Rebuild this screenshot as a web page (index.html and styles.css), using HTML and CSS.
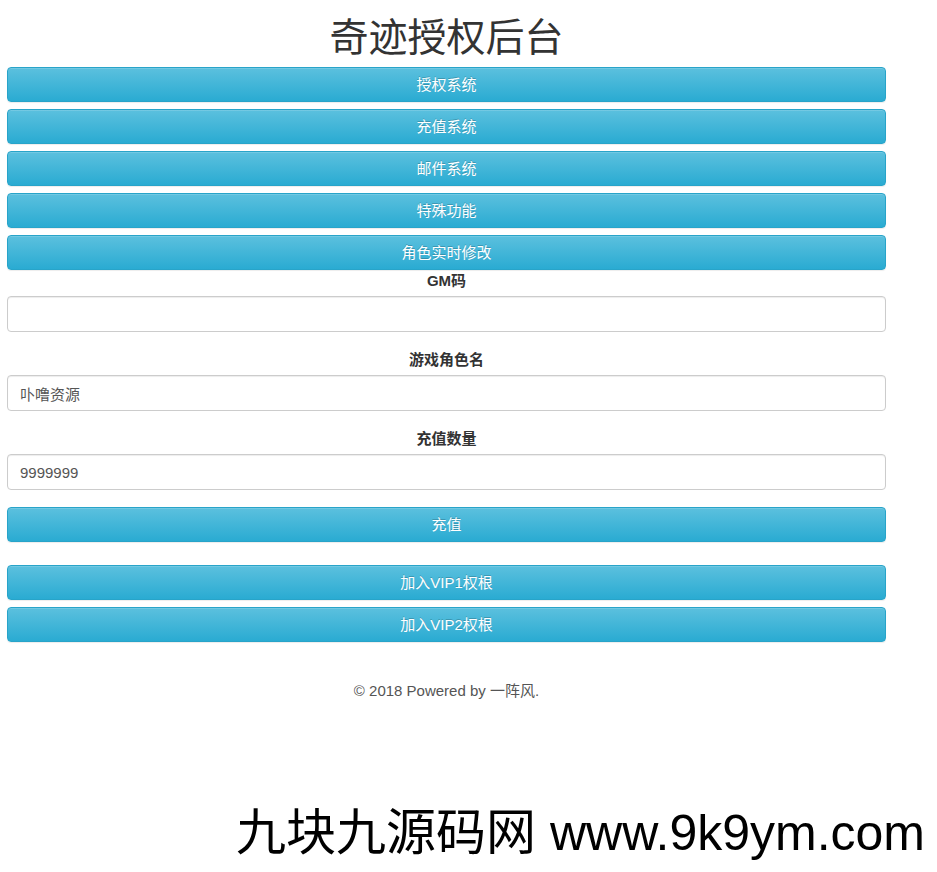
FILE: index.html
```html
<!DOCTYPE html>
<html lang="zh-CN">
<head>
<meta charset="utf-8">
<title>奇迹授权后台</title>
<link rel="stylesheet" href="styles.css">
</head>
<body>
<div class="container">
  <header class="page-header">
    <h1 class="title">奇迹授权后台</h1>
  </header>
  <nav class="menu">
    <button class="btn">授权系统</button>
    <button class="btn">充值系统</button>
    <button class="btn">邮件系统</button>
    <button class="btn">特殊功能</button>
    <button class="btn">角色实时修改</button>
  </nav>
  <form class="form">
    <div class="form-group">
      <label class="label">GM码</label>
      <input class="input" type="text" value="">
    </div>
    <div class="form-group">
      <label class="label">游戏角色名</label>
      <input class="input" type="text" value="卟噜资源">
    </div>
    <div class="form-group form-group-last">
      <label class="label">充值数量</label>
      <input class="input" type="text" value="9999999">
    </div>
    <button class="btn" type="button">充值</button>
  </form>
  <div class="vip">
    <button class="btn">加入VIP1权根</button>
    <button class="btn">加入VIP2权根</button>
  </div>
  <footer class="footer">© 2018 Powered by 一阵风.</footer>
</div>
<div class="watermark">九块九源码网 www.9k9ym.com</div>
</body>
</html>
```

FILE: styles.css
```css
html, body {
  margin: 0;
  padding: 0;
  background: #fff;
}
body {
  font-family: "Liberation Sans", "Noto Sans CJK SC", sans-serif;
  font-size: 15px;
  color: #333;
  width: 937px;
  height: 872px;
  position: relative;
  overflow: hidden;
}
.container {
  width: 879px;
  margin-left: 7px;
  display: flex;
  flex-direction: column;
}
.page-header {
  height: 67px;
  display: flex;
  align-items: center;
  justify-content: center;
}
.title {
  margin: 0;
  font-size: 39px;
  font-weight: normal;
  line-height: 1;
  color: #333;
  font-family: "Noto Sans CJK SC", sans-serif;
  padding-top: 2px;
}
.btn {
  display: block;
  width: 100%;
  height: 35px;
  box-sizing: border-box;
  border: 1px solid #28a4c9;
  border-radius: 4px;
  background: linear-gradient(to bottom, #5bc0de 0%, #2aabd2 100%);
  color: #fff;
  font-family: "Liberation Sans", "Noto Sans CJK SC", sans-serif;
  font-size: 15px;
  line-height: 20px;
  padding: 0;
  text-shadow: 0 -1px 0 rgba(0,0,0,.2);
  box-shadow: inset 0 1px 0 rgba(255,255,255,.15), 0 1px 1px rgba(0,0,0,.075);
  cursor: pointer;
}
.menu {
  display: flex;
  flex-direction: column;
  gap: 7px;
  margin-bottom: 1px;
}
.form {
  display: flex;
  flex-direction: column;
}
.form-group {
  display: flex;
  flex-direction: column;
  margin-bottom: 18px;
}
.form-group-last {
  margin-bottom: 17px;
}
.label {
  display: block;
  text-align: center;
  font-weight: bold;
  line-height: 20px;
  margin-bottom: 5px;
  color: #333;
}
.input {
  display: block;
  width: 100%;
  height: 36px;
  box-sizing: border-box;
  padding: 6px 12px;
  font-family: "Liberation Sans", "Noto Sans CJK SC", sans-serif;
  font-size: 15px;
  color: #555;
  background: #fff;
  border: 1px solid #ccc;
  border-radius: 4px;
  box-shadow: inset 0 1px 1px rgba(0,0,0,.075);
  outline: none;
}
.vip {
  display: flex;
  flex-direction: column;
  gap: 7px;
  margin-top: 23px;
}
.footer {
  margin-top: 39px;
  text-align: center;
  line-height: 20px;
  color: #555;
}
.watermark {
  position: absolute;
  right: 12px;
  top: 808px;
  font-family: "Liberation Sans", "Noto Sans CJK SC", sans-serif;
  font-size: 50px;
  line-height: 50px;
  color: #000;
  white-space: nowrap;
}
```
